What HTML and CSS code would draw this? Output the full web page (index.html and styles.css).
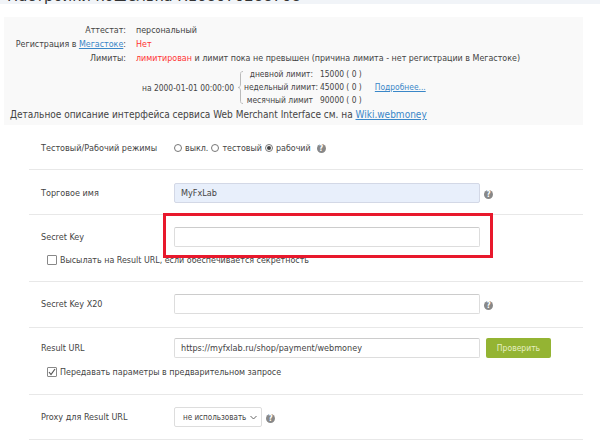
FILE: index.html
```html
<!DOCTYPE html>
<html lang="en">
<head>
  <meta charset="UTF-8">
  <title>Настройки кошелька</title>
  <link rel="stylesheet" href="styles.css">
</head>
<body>
  <div class="page-head">
    <h1>Настройки кошелька R168070288708</h1>
  </div>

  <!-- Info block -->
  <div class="info">
    <div class="info-row">
      <div class="info-label">Аттестат:</div>
      <div>персональный</div>
    </div>
    <div class="info-row">
      <div class="info-label">Регистрация в <a href="#">Мегастоке</a>:</div>
      <div class="red">Нет</div>
    </div>
    <div class="info-row">
      <div class="info-label">Лимиты:</div>
      <div><span class="red">лимитирован</span> и лимит пока не превышен (причина лимита - нет регистрации в Мегастоке)</div>
    </div>
    <div class="limits">
      <div class="limits-date">на 2000-01-01 00:00:00</div>
      <svg class="limits-brace" width="7" height="33" viewBox="0 0 7 33"><path d="M6 .5C3.500 .5 3.500 2 3.500 4V13C3.500 15 3 16.500 1 16.500C3 16.500 3.500 18 3.500 20V29C3.500 31 3.500 32.500 6 32.500" fill="none" stroke="#bbb"/></svg>
      <div class="limits-list">
        <div class="limit"><span class="limit-name">дневной лимит:</span><span>15000 ( 0 )</span></div>
        <div class="limit"><span class="limit-name">недельный лимит:</span><span>45000 ( 0 )</span><a href="#">Подробнее...</a></div>
        <div class="limit"><span class="limit-name">месячный лимит</span><span>90000 ( 0 )</span></div>
      </div>
    </div>
    <div class="info-note">Детальное описание интерфейса сервиса Web Merchant Interface см. на <a href="#">Wiki.webmoney</a></div>
  </div>

  <!-- Settings form -->
  <form class="settings">
    <div class="row row-mode">
      <div class="row-main">
        <label class="row-label">Тестовый/Рабочий режимы</label>
        <div class="radios">
          <span class="radio"></span><span class="radio-text">выкл.</span>
          <span class="radio"></span><span class="radio-text">тестовый</span>
          <span class="radio checked"></span><span class="radio-text">рабочий</span>
          <span class="help">?</span>
        </div>
      </div>
    </div>

    <div class="row row-name">
      <div class="row-main">
        <label class="row-label">Торговое имя</label>
        <input class="field field-filled" type="text" value="MyFxLab">
        <span class="help">?</span>
      </div>
    </div>

    <div class="row row-secret">
      <div class="row-main">
        <label class="row-label">Secret Key</label>
        <div class="marked">
          <input class="field" type="text">
        </div>
      </div>
      <div class="check-line"><span class="check"></span>Высылать на Result URL, если обеспечивается секретность</div>
    </div>

    <div class="row row-x20">
      <div class="row-main">
        <label class="row-label">Secret Key X20</label>
        <input class="field" type="text">
        <span class="help">?</span>
      </div>
    </div>

    <div class="row row-result">
      <div class="row-main">
        <label class="row-label">Result URL</label>
        <input class="field" type="text" value="https://myfxlab.ru/shop/payment/webmoney">
        <button type="button" class="btn">Проверить</button>
      </div>
      <div class="check-line check-line-low"><span class="check"><svg width="8" height="8" viewBox="0 0 8 8"><path d="M1 4l2 2.500L7 1" fill="none" stroke="#555" stroke-width="1.200"/></svg></span>Передавать параметры в предварительном запросе</div>
    </div>

    <div class="row row-proxy">
      <div class="row-main">
        <label class="row-label">Proxy для Result URL</label>
        <div class="select">не использовать<svg width="7" height="5" viewBox="0 0 7 5"><path d="M.5 1l3 3 3-3" fill="none" stroke="#666"/></svg></div>
        <span class="help">?</span>
      </div>
    </div>
  </form>
</body>
</html>
```

FILE: styles.css
```css
body {
  margin: 0;
  height: 448px;
  overflow: hidden;
  background-color: #fff;
  font-family: "DejaVu Sans Condensed", "DejaVu Sans", Verdana, sans-serif;
  font-size: 8.850px;
  color: #444;
}

a {
  color: #3a87c8;
}

.page-head {
  height: 4px;
  overflow: hidden;
  padding-left: 7px;
  background-color: #f1f4f8;
}

h1 {
  margin: -13px 0 0;
  font-size: 16.500px;
  font-weight: normal;
  line-height: 18px;
  white-space: nowrap;
  color: #333;
}

.info {
  width: 579px;
  height: 108px;
  margin: 13px 0 0 4px;
  padding-top: 6px;
  box-sizing: border-box;
  background-color: #f9f9f9;
}

.info-row {
  display: flex;
  gap: 10px;
  height: 14px;
  line-height: 14px;
  white-space: nowrap;
}

.info-label {
  width: 122px;
  text-align: right;
}

.red {
  color: #f33;
}

.limits {
  display: flex;
  align-items: center;
  height: 39px;
  margin-top: 3px;
  font-size: 8.400px;
}

.limits-date {
  width: 230px;
  text-align: right;
}

.limits-brace {
  margin-left: 3px;
}

.limit {
  display: flex;
  height: 13px;
  line-height: 13px;
  white-space: nowrap;
}

.limit-name {
  width: 69px;
  margin-right: 7px;
  text-align: right;
}

.limit a {
  margin-left: 13px;
}

.info-note {
  margin-top: 1px;
  padding-left: 6px;
  font-size: 10px;
  line-height: 14px;
  white-space: nowrap;
}

.settings {
  width: 554px;
  margin-left: 29px;
}

.row {
  border-bottom: 1px solid #e8e8e8;
  box-sizing: border-box;
}

.row-mode { height: 45px; padding-top: 13px; }
.row-name { height: 45px; padding-top: 13px; }
.row-secret { height: 67px; padding-top: 12px; }
.row-x20 { height: 46px; padding-top: 12px; }
.row-result { height: 67px; padding-top: 10px; }
.row-proxy { height: 45px; padding-top: 12px; }

.row-main {
  display: flex;
  align-items: center;
  min-height: 20px;
}

.row-label {
  flex: none;
  width: 133px;
  padding-left: 12px;
  font-size: 9px;
}

.radios {
  display: flex;
  align-items: center;
}

.radio {
  width: 6px;
  height: 6px;
  border: 1px solid #777;
  border-radius: 50%;
  position: relative;
}

.radio.checked::after {
  content: "";
  position: absolute;
  left: 1px;
  top: 1px;
  width: 4px;
  height: 4px;
  border-radius: 50%;
  background-color: #444;
}

.radio-text {
  margin: 0 3px;
}

.help {
  width: 9px;
  height: 9px;
  margin: 2px 0 0 4px;
  border-radius: 50%;
  background-color: #888;
  color: #fff;
  font-size: 8px;
  font-weight: bold;
  line-height: 9px;
  text-align: center;
}

.radios .help {
  margin: 0 0 0 3px;
}

.field {
  width: 306px;
  height: 20px;
  padding: 0 6px;
  box-sizing: border-box;
  border: 1px solid #ddd;
  border-top-color: #ccc;
  border-radius: 2px;
  background-color: #fff;
  font-family: inherit;
  font-size: 9px;
  color: #444;
}

.field-filled {
  background-color: #e8effb;
  border-color: #d3d8e6;
}

.marked {
  position: relative;
  width: 306px;
  height: 20px;
}

/* red annotation drawn over the screenshot */
.marked::after {
  content: "";
  position: absolute;
  left: -11px;
  top: -14px;
  width: 330px;
  height: 45px;
  border: 3px solid #e8182c;
  box-sizing: border-box;
}

.check-line {
  display: flex;
  align-items: center;
  gap: 3px;
  margin: 8px 0 0 18px;
  line-height: 10px;
}

.check-line-low {
  margin-top: 9px;
}

.check {
  width: 8px;
  height: 8px;
  border: 1px solid #888;
  border-radius: 1px;
}

.check svg {
  display: block;
}

.btn {
  width: 65px;
  height: 20px;
  margin-left: 6px;
  padding: 0;
  background-color: #94b433;
  color: #e6efc4;
  border: none;
  border-radius: 2px;
  font-family: inherit;
  font-size: 8.500px;
}

.select {
  display: flex;
  align-items: center;
  justify-content: space-between;
  width: 88px;
  height: 20px;
  padding: 0 4px 0 8px;
  box-sizing: border-box;
  border: 1px solid #ddd;
  border-radius: 2px;
  font-size: 8px;
  white-space: nowrap;
}
```
